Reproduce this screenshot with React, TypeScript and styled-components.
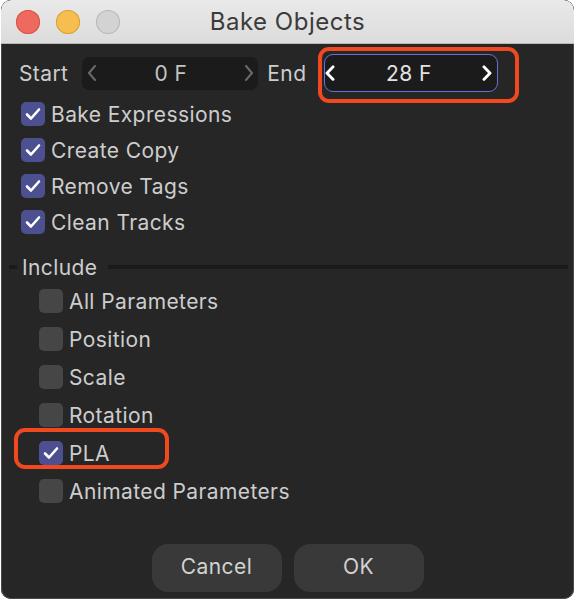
import styled, { createGlobalStyle } from "styled-components";

const GlobalStyle = createGlobalStyle`
  html, body {
    margin: 0;
    padding: 0;
    background: #ffffff;
  }
  body {
    font-family: Inter, "Liberation Sans", sans-serif;
  }
`;

const StyledWindow = styled.div`
  width: 573px;
  height: 599px;
  margin-left: 1px;
  display: flex;
  flex-direction: column;
  border-radius: 10px;
  overflow: hidden;
  background-color: #262626;
  box-shadow: inset 0 0 0 1px #4a4a4a;
`;
const StyledTitleBar = styled.div`
  height: 43px;
  flex-shrink: 0;
  display: grid;
  grid-template-columns: 1fr auto 1fr;
  align-items: center;
  background: linear-gradient(#e9e9e9, #dcdcdc);
  border-bottom: 1px solid #b8b8b8;
  border-radius: 10px 10px 0 0;
`;
const StyledLights = styled.div`
  display: flex;
  gap: 16px;
  padding-left: 15px;
`;
const StyledLight = styled.span<{ $fill: string; $edge: string }>`
  width: 24px;
  height: 24px;
  border-radius: 50%;
  background-color: ${(p) => p.$fill};
  box-shadow: inset 0 0 0 1px ${(p) => p.$edge};
`;
const StyledTitle = styled.div`
  font-size: 24px;
  color: #3b3b3b;
  letter-spacing: 0.5px;
  padding-bottom: 1px;
`;
const StyledBody = styled.div`
  flex: 1;
  display: flex;
  flex-direction: column;
  color: #cdcdcd;
  font-size: 21px;
  letter-spacing: 0.4px;
`;
const StyledRangeRow = styled.div`
  display: flex;
  align-items: center;
  height: 38px;
  margin-top: 10px;
  padding-left: 18px;
`;
const StyledLabel = styled.span<{ $before: number; $after: number }>`
  margin-left: ${(p) => p.$before}px;
  margin-right: ${(p) => p.$after}px;
`;
const StyledField = styled.div<{ $active?: boolean }>`
  position: relative;
  width: ${(p) => (p.$active ? 174 : 176)}px;
  height: ${(p) => (p.$active ? 38 : 33)}px;
  box-sizing: border-box;
  display: flex;
  align-items: center;
  justify-content: space-between;
  padding: 0 ${(p) => (p.$active ? "5px 0 0" : "4px 0 5px")};
  border-radius: ${(p) => (p.$active ? 9 : 7)}px;
  background-color: #1b1b1b;
  border: ${(p) => (p.$active ? "1.5px solid #6670d8" : "none")};
  color: ${(p) => (p.$active ? "#e2e2e2" : "#c4c4c4")};
`;
const StyledValue = styled.span`
  flex: 1;
  text-align: center;
`;
const StyledMarked = styled.div<{
  $top: number;
  $left: number;
  $w: number;
  $h: number;
}>`
  position: relative;
  &::after {
    content: "";
    position: absolute;
    top: ${(p) => p.$top}px;
    left: ${(p) => p.$left}px;
    width: ${(p) => p.$w}px;
    height: ${(p) => p.$h}px;
    box-sizing: border-box;
    border: 4px solid #f0481f;
    border-radius: 11px;
    pointer-events: none;
  }
`;
const StyledList = styled.div<{ $indent: number; $gap: number; $top: number }>`
  display: flex;
  flex-direction: column;
  align-items: flex-start;
  gap: ${(p) => p.$gap}px;
  padding-left: ${(p) => p.$indent}px;
  margin-top: ${(p) => p.$top}px;
`;
const StyledCheckRow = styled.div`
  display: flex;
  align-items: center;
  gap: 6px;
  height: 24px;
`;
const StyledBox = styled.span<{ $checked: boolean }>`
  width: 24px;
  height: 24px;
  border-radius: 5px;
  display: flex;
  align-items: center;
  justify-content: center;
  background-color: ${(p) => (p.$checked ? "#4d5090" : "#464646")};
`;
const StyledGroupHead = styled.div`
  display: flex;
  align-items: center;
  margin-top: 21px;
  padding: 0 6px 0 8px;
  height: 24px;
`;
const StyledDash = styled.span<{ $grow?: boolean }>`
  height: 4px;
  background-color: #1a1a1a;
  width: 8px;
  flex: ${(p) => (p.$grow ? 1 : "none")};
`;
const StyledGroupTitle = styled.span`
  padding: 0 11px 0 5px;
`;
const StyledButtons = styled.div`
  margin-top: auto;
  margin-bottom: 7px;
  display: flex;
  justify-content: center;
  gap: 12px;
`;
const StyledButton = styled.button`
  width: 130px;
  height: 48px;
  border: none;
  border-radius: 16px;
  background-color: #393939;
  color: #d2d2d2;
  font-family: inherit;
  font-size: 21px;
  letter-spacing: 0.4px;
  padding: 0 0 3px;
`;

const Chevron = ({ dir, bold }: { dir: "l" | "r"; bold?: boolean }) => (
  <svg width="10" height="16" viewBox="0 0 10 16">
    <polyline
      points={dir === "l" ? "8,1 2,8 8,15" : "2,1 8,8 2,15"}
      fill="none"
      stroke={bold ? "#ffffff" : "#6a6a6a"}
      strokeWidth={bold ? 3 : 2}
      strokeLinecap="round"
      strokeLinejoin="round"
      transform={bold ? "scale(1 0.9) translate(0 1)" : undefined}
    />
  </svg>
);

const Check = ({ label, checked }: { label: string; checked: boolean }) => (
  <StyledCheckRow>
    <StyledBox $checked={checked}>
      {checked && (
        <svg width="16" height="14" viewBox="0 0 16 14">
          <polyline
            points="2,7.5 6,11.5 14,2.5"
            fill="none"
            stroke="#ffffff"
            strokeWidth="2.6"
            strokeLinecap="round"
            strokeLinejoin="round"
          />
        </svg>
      )}
    </StyledBox>
    {label}
  </StyledCheckRow>
);

const options = ["Bake Expressions", "Create Copy", "Remove Tags", "Clean Tracks"];
const includes = ["All Parameters", "Position", "Scale", "Rotation"];

export default function App() {
  return (
    <>
      <GlobalStyle />
      <StyledWindow>
        <StyledTitleBar>
          <StyledLights>
            <StyledLight $fill="#ee6a5f" $edge="#d4574b" />
            <StyledLight $fill="#f6be4f" $edge="#d9a03c" />
            <StyledLight $fill="#d3d3d3" $edge="#b9b9b9" />
          </StyledLights>
          <StyledTitle>Bake Objects</StyledTitle>
          <span />
        </StyledTitleBar>

        <StyledBody>
          <StyledRangeRow>
            <StyledLabel $before={0} $after={14}>
              Start
            </StyledLabel>
            <StyledField>
              <Chevron dir="l" />
              <StyledValue>0 F</StyledValue>
              <Chevron dir="r" />
            </StyledField>
            <StyledLabel $before={9} $after={18}>
              End
            </StyledLabel>
            <StyledMarked $top={-7} $left={-6} $w={201} $h={56}>
              <StyledField $active>
                <Chevron dir="l" bold />
                <StyledValue>28 F</StyledValue>
                <Chevron dir="r" bold />
              </StyledField>
            </StyledMarked>
          </StyledRangeRow>

          <StyledList $indent={20} $gap={12} $top={10}>
            {options.map((o) => (
              <Check key={o} label={o} checked />
            ))}
          </StyledList>

          <StyledGroupHead>
            <StyledDash />
            <StyledGroupTitle>Include</StyledGroupTitle>
            <StyledDash $grow />
          </StyledGroupHead>

          <StyledList $indent={38} $gap={14} $top={10}>
            {includes.map((o) => (
              <Check key={o} label={o} checked={false} />
            ))}
            <StyledMarked $top={-13} $left={-25} $w={155} $h={41}>
              <Check label="PLA" checked />
            </StyledMarked>
            <Check label="Animated Parameters" checked={false} />
          </StyledList>

          <StyledButtons>
            <StyledButton>Cancel</StyledButton>
            <StyledButton>OK</StyledButton>
          </StyledButtons>
        </StyledBody>
      </StyledWindow>
    </>
  );
}
